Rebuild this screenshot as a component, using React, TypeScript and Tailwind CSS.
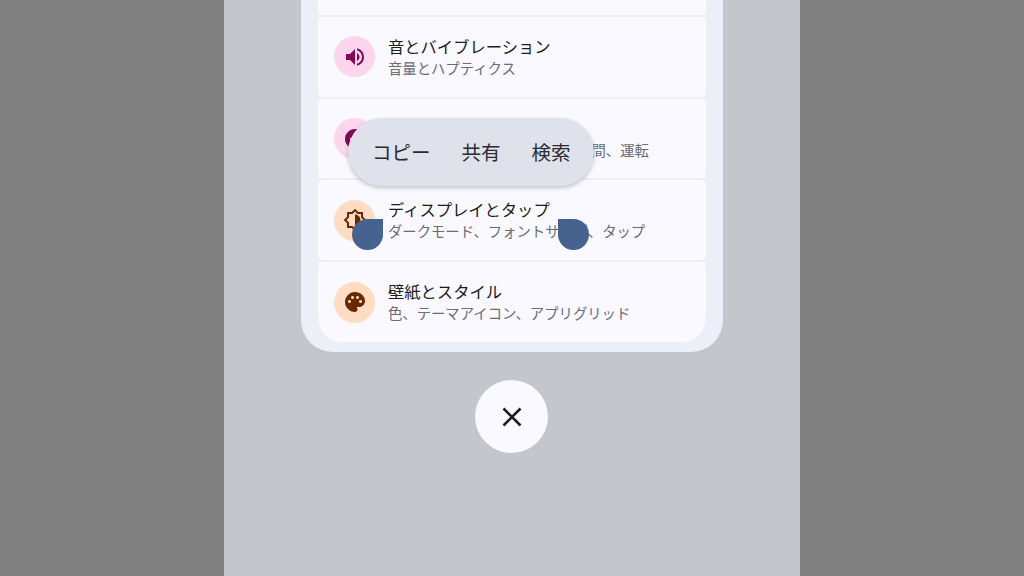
const volumeUp =
  "M3 9v6h4l5 5V4L7 9H3zm13.5 3c0-1.77-1.02-3.29-2.5-4.03v8.05c1.48-.73 2.5-2.25 2.5-4.02zM14 3.23v2.06c2.89.86 5 3.54 5 6.71s-2.11 5.85-5 6.71v2.06c4.01-.91 7-4.49 7-8.77 0-4.28-2.99-7.86-7-8.77z";
const modes = "M12 2C6.48 2 2 6.48 2 12s4.48 10 10 10 10-4.48 10-10S17.52 2 12 2zm5 11H7v-2h10v2z";
const brightness =
  "M20 15.31L23.31 12 20 8.69V4h-4.69L12 .69 8.69 4H4v4.69L.69 12 4 15.31V20h4.69L12 23.31 15.31 20H20v-4.69zM18 14.48V18h-3.52L12 20.48 9.52 18H6v-3.52L3.52 12 6 9.52V6h3.52L12 3.52 14.48 6H18v3.52L20.48 12 18 14.48zM12 6.5v11c3.03 0 5.5-2.47 5.5-5.5S15.03 6.5 12 6.5z";
const palette =
  "M12 2C6.49 2 2 6.49 2 12s4.49 10 10 10c1.38 0 2.5-1.12 2.5-2.5 0-.61-.23-1.2-.64-1.67-.08-.1-.13-.21-.13-.33 0-.28.22-.5.5-.5H16c3.31 0 6-2.69 6-6 0-4.96-4.49-9-10-9zm5.5 11c-.83 0-1.5-.67-1.5-1.5s.67-1.5 1.5-1.5 1.5.67 1.5 1.5-.67 1.5-1.5 1.5zm-3-4c-.83 0-1.5-.67-1.5-1.5S13.67 6 14.5 6s1.5.67 1.5 1.5S15.33 9 14.5 9zM5 11.5c0-.83.67-1.5 1.5-1.5s1.5.67 1.5 1.5S7.33 13 6.5 13 5 12.33 5 11.5zm6-4c0 .83-.67 1.5-1.5 1.5S8 8.33 8 7.5 8.67 6 9.5 6s1.5.67 1.5 1.5z";

function SettingRow({ icon, tone, title, sub, last }: { icon: string; tone: "pink" | "orange"; title: string; sub: string; last?: boolean }) {
  return (
    <div className={`h-[80px] bg-[#f9f9ff] flex items-center pl-[16px] gap-[13px] ${last ? "rounded-t-[3px] rounded-b-[24px]" : "rounded-[3px]"}`}>
      <div className={`w-[41px] h-[41px] rounded-full flex items-center justify-center ${tone === "pink" ? "bg-[#fdd6ee] text-[#820958]" : "bg-[#ffdcc2] text-[#672a00]"}`}>
        <svg viewBox="0 0 24 24" className="w-[24px] h-[24px]" fill="currentColor">
          <path d={icon} />
        </svg>
      </div>
      <div className="flex flex-col mb-[1px]">
        <span className="text-[16.3px] leading-[23px] text-[#1b1c20]">{title}</span>
        <span className="text-[14.35px] leading-[21px] -mt-[1px] text-[#6a6c73] whitespace-nowrap">{sub}</span>
      </div>
    </div>
  );
}

export default function App() {
  return (
    <div className="w-[1024px] h-[576px] bg-[#808080] flex justify-center overflow-hidden font-['Noto_Sans_CJK_JP','Noto_Sans',sans-serif]">
      <div className="relative w-[576px] h-full bg-[#c3c6cc] flex flex-col items-center">
        <div className="w-[422px] h-[352px] bg-[#edeff8] rounded-b-[32px] px-[17px] pb-[10px] flex flex-col justify-end gap-[2px] shrink-0">
          <div className="h-[15px] bg-[#f9f9ff] rounded-b-[3px]" />
          <SettingRow icon={volumeUp} tone="pink" title="音とバイブレーション" sub="音量とハプティクス" />
          <SettingRow icon={modes} tone="pink" title="モード" sub="サイレント モード、おやすみ時間、運転" />
          <SettingRow icon={brightness} tone="orange" title="ディスプレイとタップ" sub="ダークモード、フォントサイズ、タップ" />
          <SettingRow icon={palette} tone="orange" title="壁紙とスタイル" sub="色、テーマアイコン、アプリグリッド" last />
        </div>
        <button className="mt-[28px] ml-[-1px] w-[73px] h-[73px] rounded-full bg-[#f9f9ff] flex items-center justify-center text-[#1b1c20]">
          <svg viewBox="0 0 24 24" className="w-[24px] h-[24px]" fill="none" stroke="currentColor" strokeWidth="2.6">
            <path d="M3.5 3.5l17 17M20.5 3.5l-17 17" />
          </svg>
        </button>

        {/* text selection popup */}
        <div className="absolute left-[124px] top-[118px] w-[246px] h-[68px] rounded-full bg-[#dfe2eb] shadow-[0_2px_4px_rgba(0,0,0,0.22)] flex items-center pl-[24px] gap-[31px] text-[19.5px] text-[#2a2c32]">
          <span>コピー</span>
          <span>共有</span>
          <span>検索</span>
        </div>

        {/* selection handles */}
        <div className="absolute left-[128px] top-[219px] w-[31px] h-[31px] bg-[#46628f] rounded-full rounded-tr-none" />
        <div className="absolute left-[334px] top-[219px] w-[31px] h-[31px] bg-[#46628f] rounded-full rounded-tl-none" />
      </div>
    </div>
  );
}
